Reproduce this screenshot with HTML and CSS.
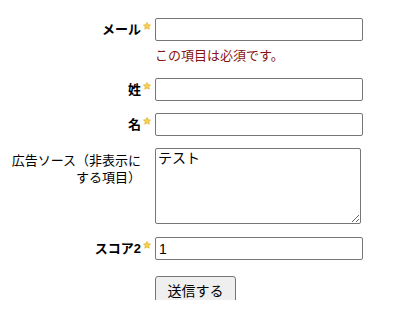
FILE: index.html
```html
<!DOCTYPE html>
<html lang="ja">
<head>
<meta charset="utf-8">
<link rel="stylesheet" href="styles.css">
</head>
<body>
<div class="frame">
  <form class="form">
    <label class="label" for="email">メール</label>
    <span class="req"><svg viewBox="0 0 10 10" width="8" height="8"><path d="M5 0.6 L6.3 3.5 L9.4 3.8 L7.1 5.9 L7.8 9 L5 7.4 L2.2 9 L2.9 5.9 L0.6 3.8 L3.7 3.5 Z" fill="#f7d54a" stroke="#e0a520" stroke-width="0.8" stroke-linejoin="round"/></svg></span>
    <div class="field">
      <input class="input" id="email" type="text">
      <div class="error">この項目は必須です。</div>
    </div>

    <label class="label" for="sei">姓</label>
    <span class="req"><svg viewBox="0 0 10 10" width="8" height="8"><path d="M5 0.6 L6.3 3.5 L9.4 3.8 L7.1 5.9 L7.8 9 L5 7.4 L2.2 9 L2.9 5.9 L0.6 3.8 L3.7 3.5 Z" fill="#f7d54a" stroke="#e0a520" stroke-width="0.8" stroke-linejoin="round"/></svg></span>
    <div class="field"><input class="input" id="sei" type="text"></div>

    <label class="label" for="mei">名</label>
    <span class="req"><svg viewBox="0 0 10 10" width="8" height="8"><path d="M5 0.6 L6.3 3.5 L9.4 3.8 L7.1 5.9 L7.8 9 L5 7.4 L2.2 9 L2.9 5.9 L0.6 3.8 L3.7 3.5 Z" fill="#f7d54a" stroke="#e0a520" stroke-width="0.8" stroke-linejoin="round"/></svg></span>
    <div class="field"><input class="input" id="mei" type="text"></div>

    <label class="label label-multi" for="src">広告ソース（非表示にする項目）</label>
    <span class="req"></span>
    <div class="field"><textarea class="textarea" id="src">テスト</textarea></div>

    <label class="label" for="score">スコア2</label>
    <span class="req"><svg viewBox="0 0 10 10" width="8" height="8"><path d="M5 0.6 L6.3 3.5 L9.4 3.8 L7.1 5.9 L7.8 9 L5 7.4 L2.2 9 L2.9 5.9 L0.6 3.8 L3.7 3.5 Z" fill="#f7d54a" stroke="#e0a520" stroke-width="0.8" stroke-linejoin="round"/></svg></span>
    <div class="field"><input class="input" id="score" type="text" value="1"></div>

    <div class="field actions"><button class="button" type="button">送信する</button></div>
  </form>
</div>
</body>
</html>
```

FILE: styles.css
```css
html, body {
  background: #ffffff;
}
body {
  margin: 8px;
  font-family: "Liberation Sans", "Noto Sans CJK JP", sans-serif;
  font-size: 13px;
  color: #000000;
}
.frame {
  height: 292px;
  overflow: hidden;
}
.form {
  display: grid;
  grid-template-columns: 133px 14px 208px;
  row-gap: 12px;
  padding-top: 10px;
  align-items: start;
}
.label {
  grid-column: 1;
  text-align: right;
  font-weight: bold;
  line-height: 23px;
  font-size: 13px;
}
.label-multi {
  font-weight: normal;
  line-height: 17px;
  padding-top: 4px;
}
.req {
  grid-column: 2;
  display: flex;
  padding-left: 2px;
  padding-top: 4px;
  height: 8px;
}
.req svg {
  display: block;
}
.field {
  grid-column: 3;
  display: flex;
  flex-direction: column;
}
.input {
  box-sizing: border-box;
  width: 208px;
  height: 23px;
  margin: 0;
  padding: 1px 3px;
  border: 1px solid #767676;
  border-radius: 2px;
  background: #ffffff;
  font-family: "Liberation Sans", "Noto Sans CJK JP", sans-serif;
  font-size: 14px;
  color: #000000;
}
.textarea {
  box-sizing: border-box;
  width: 206px;
  height: 76px;
  margin: 0 0 1px 0;
  padding: 1px 2px;
  border: 1px solid #767676;
  border-radius: 2px;
  background: #ffffff;
  font-family: "Liberation Sans", "Noto Sans CJK JP", sans-serif;
  font-size: 14px;
  line-height: 16px;
  color: #000000;
}
.error {
  margin-top: 5px;
  line-height: 20px;
  color: #861414;
  font-size: 13px;
}
.actions {
  margin-top: 4px;
  align-items: flex-start;
}
.button {
  box-sizing: border-box;
  width: 81px;
  height: 28px;
  margin: 0;
  padding: 0;
  border: 1px solid #767676;
  border-radius: 3px;
  background: #efefef;
  font-family: "Liberation Sans", "Noto Sans CJK JP", sans-serif;
  font-size: 14px;
  color: #000000;
}
```
